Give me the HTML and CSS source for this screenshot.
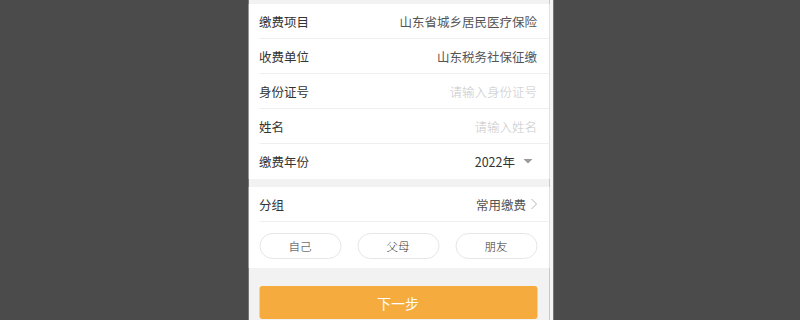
FILE: index.html
```html
<!DOCTYPE html>
<html lang="zh-CN">
<head>
<meta charset="utf-8">
<title>缴费</title>
<link rel="stylesheet" href="styles.css">
</head>
<body>
<div class="phone">
  <div class="main">
    <div class="card">
      <div class="row"><span class="label">缴费项目</span><span class="value">山东省城乡居民医疗保险</span></div>
      <div class="row"><span class="label">收费单位</span><span class="value">山东税务社保征缴</span></div>
      <div class="row"><span class="label">身份证号</span><span class="value placeholder">请输入身份证号</span></div>
      <div class="row"><span class="label">姓名</span><span class="value placeholder">请输入姓名</span></div>
      <div class="row last"><span class="label">缴费年份</span><span class="value dark">2022年<svg class="caret" width="9" height="5" viewBox="0 0 9 5"><polygon points="0,0 9,0 4.5,4.5" fill="#9a9a9a"/></svg></span></div>
    </div>
    <div class="card gap">
      <div class="row"><span class="label">分组</span><span class="value">常用缴费<svg class="chev" width="7" height="12" viewBox="0 0 7 12"><polyline points="1,1 6,6 1,11" fill="none" stroke="#b5b5b5" stroke-width="1"/></svg></span></div>
      <div class="chips">
        <span class="chip">自己</span>
        <span class="chip">父母</span>
        <span class="chip">朋友</span>
      </div>
    </div>
    <div class="actions">
      <button class="next">下一步</button>
    </div>
  </div>
  <div class="track"></div>
</div>
</body>
</html>
```
FILE: styles.css
```css
html, body {
  margin: 0;
  padding: 0;
  height: 100%;
}
body {
  background: #4b4b4b;
  font-family: "Noto Sans CJK SC", "Noto Sans", sans-serif;
  color: #333;
}
.phone {
  width: 305px;
  height: 320px;
  margin: 0 auto;
  display: flex;
  overflow: hidden;
  transform: translateX(0.5px);
}
.main {
  flex: 1;
  background: #f2f2f2;
  padding-top: 4px;
}
.track {
  width: 4px;
  background: #f4f4f4;
}
.card {
  background: #fff;
}
.card.gap {
  margin-top: 8px;
}
.row {
  margin-left: 11px;
  padding-right: 12px;
  height: 34px;
  border-bottom: 1px solid #efefef;
  display: flex;
  align-items: center;
  justify-content: space-between;
  font-size: 12.5px;
}
.row.last {
  border-bottom: none;
  height: 35px;
}
.label {
  color: #333;
}
.value {
  color: #555;
  display: flex;
  align-items: center;
}
.value.placeholder {
  color: #c8c8c8;
  font-weight: 300;
}
.value.dark {
  color: #333;
}
.caret {
  margin-left: 8px;
  margin-right: 5px;
}
.chev {
  margin-left: 4px;
}
.chips {
  display: flex;
  justify-content: space-between;
  padding: 11px 12px 9px 11px;
}
.chip {
  width: 80px;
  height: 24px;
  border: 1px solid #e6e6e6;
  border-radius: 13px;
  display: flex;
  align-items: center;
  justify-content: center;
  font-size: 11.5px;
  font-weight: 300;
  color: #333;
}
.actions {
  padding: 18px 12px 0 11px;
}
.next {
  width: 100%;
  height: 33px;
  border: none;
  border-radius: 3px;
  background: #f5ab3d;
  color: #fff;
  font-family: "Noto Sans CJK SC", "Noto Sans", sans-serif;
  font-size: 14px;
  padding: 0;
}
```
